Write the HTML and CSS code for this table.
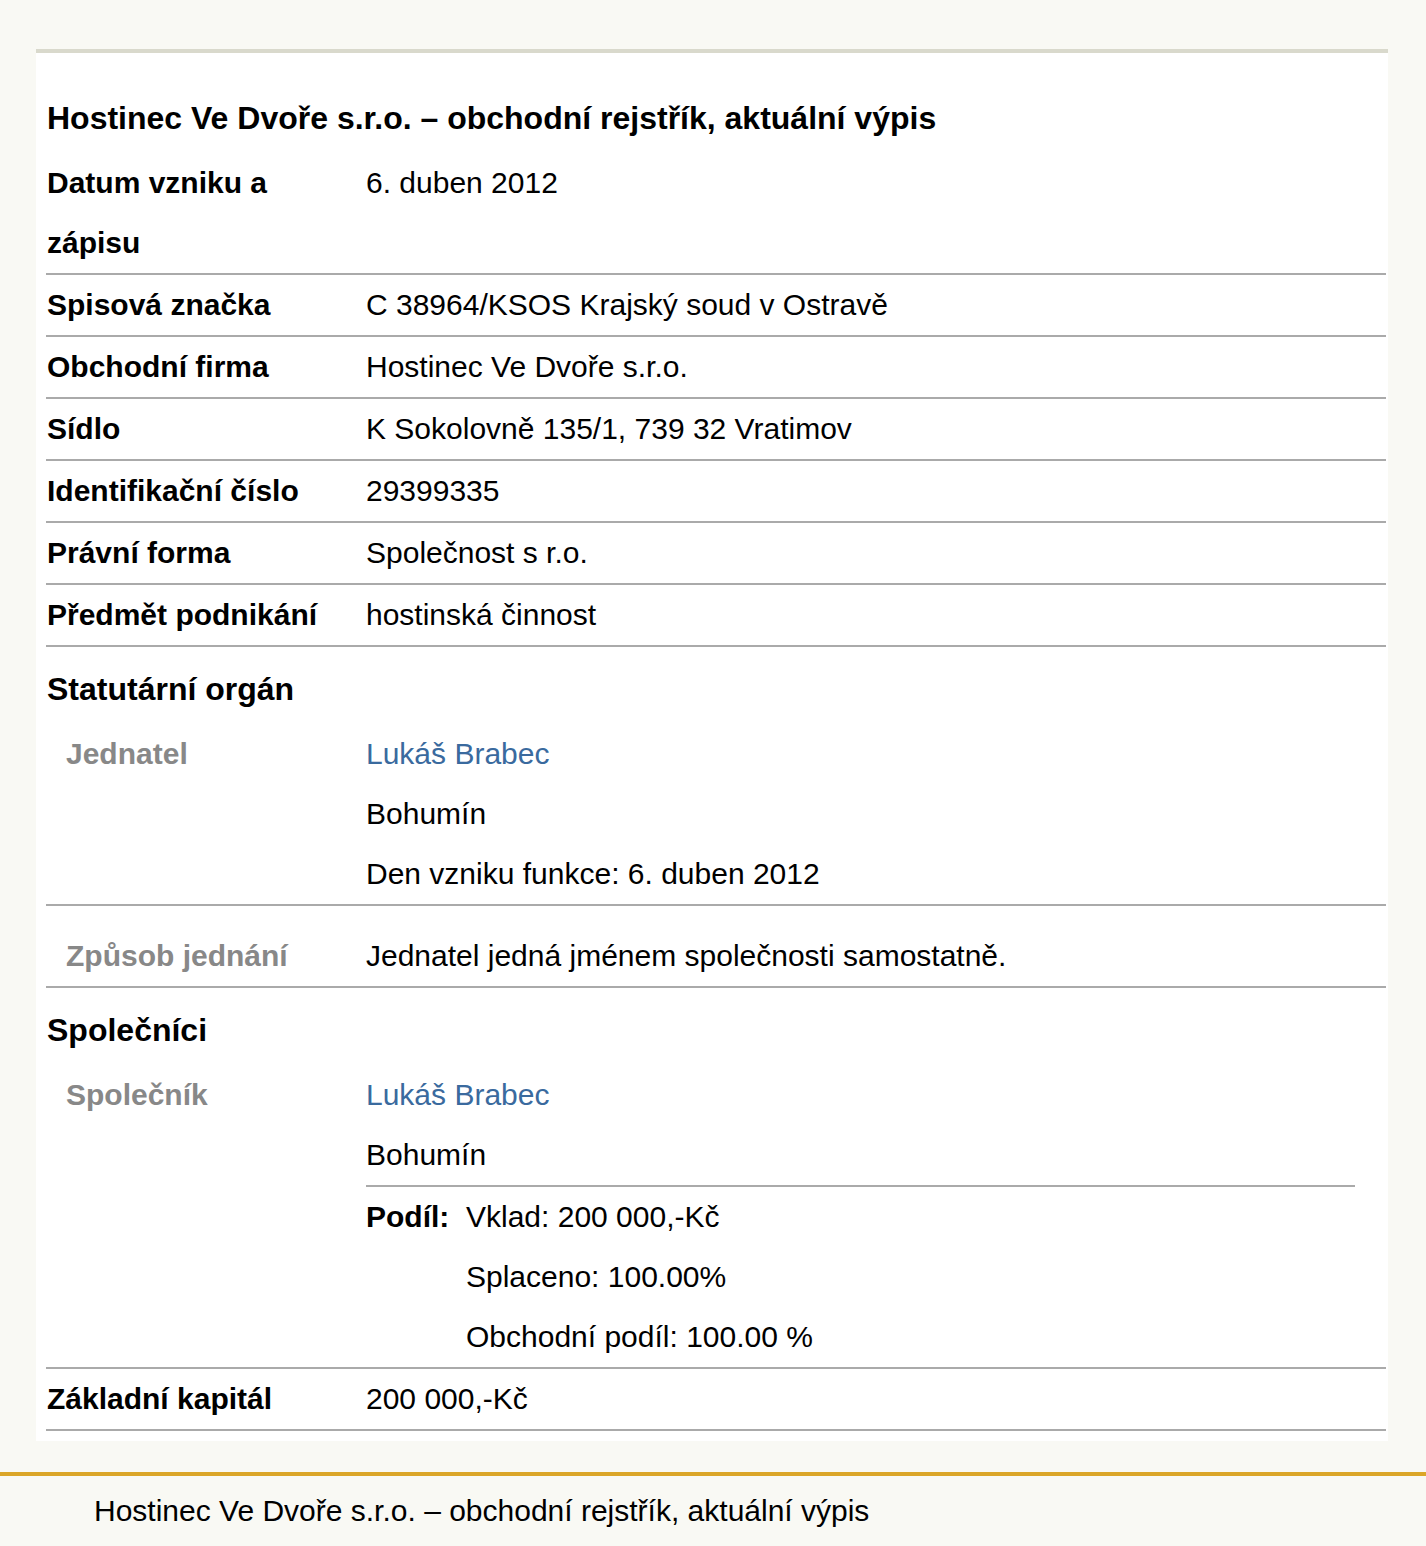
FILE: index.html
```html
<!DOCTYPE html>
<html lang="cs">
<head>
  <meta charset="UTF-8" />
  <title>Hostinec Ve Dvoře s.r.o. – obchodní rejstřík, aktuální výpis</title>
  <link rel="stylesheet" href="styles.css">
</head>
<body>
  <div class="page">
    <div class="card">
      <h2 class="title">Hostinec Ve Dvoře s.r.o. – obchodní rejstřík, aktuální výpis</h2>

      <div class="row">
        <div class="label">Datum vzniku a zápisu</div>
        <div class="value">6. duben 2012</div>
      </div>
      <div class="row">
        <div class="label">Spisová značka</div>
        <div class="value">C 38964/KSOS Krajský soud v Ostravě</div>
      </div>
      <div class="row">
        <div class="label">Obchodní firma</div>
        <div class="value">Hostinec Ve Dvoře s.r.o.</div>
      </div>
      <div class="row">
        <div class="label">Sídlo</div>
        <div class="value">K Sokolovně 135/1, 739 32 Vratimov</div>
      </div>
      <div class="row">
        <div class="label">Identifikační číslo</div>
        <div class="value">29399335</div>
      </div>
      <div class="row">
        <div class="label">Právní forma</div>
        <div class="value">Společnost s r.o.</div>
      </div>
      <div class="row">
        <div class="label">Předmět podnikání</div>
        <div class="value">hostinská činnost</div>
      </div>

      <h3 class="section">Statutární orgán</h3>
      <div class="row">
        <div class="label sub">Jednatel</div>
        <div class="value">
          <a class="person" href="#">Lukáš Brabec</a>
          <div>Bohumín</div>
          <div>Den vzniku funkce: 6. duben 2012</div>
        </div>
      </div>
      <div class="row spaced">
        <div class="label sub">Způsob jednání</div>
        <div class="value">Jednatel jedná jménem společnosti samostatně.</div>
      </div>

      <h3 class="section">Společníci</h3>
      <div class="row">
        <div class="label sub">Společník</div>
        <div class="value">
          <a class="person" href="#">Lukáš Brabec</a>
          <div>Bohumín</div>
          <div class="share">
            <div class="share-label">Podíl:</div>
            <div>
              <div>Vklad: 200 000,-Kč</div>
              <div>Splaceno: 100.00%</div>
              <div>Obchodní podíl: 100.00 %</div>
            </div>
          </div>
        </div>
      </div>
      <div class="row">
        <div class="label">Základní kapitál</div>
        <div class="value">200 000,-Kč</div>
      </div>
    </div>
  </div>

  <footer class="footer">Hostinec Ve Dvoře s.r.o. – obchodní rejstřík, aktuální výpis</footer>
</body>
</html>
```

FILE: styles.css
```css
:root {
  --page-bg: #f9f9f4;
  --card-bg: #ffffff;
  --card-top: #d9d9cc;
  --rule: #aaaaaa;
  --muted: #888888;
  --link: #3a6a9e;
  --gold: #dba628;
  --text: #000000;
}

*, *::before, *::after {
  box-sizing: border-box;
}

body {
  margin: 0;
  background-color: var(--page-bg);
  color: var(--text);
  font-family: "Liberation Sans", Arial, sans-serif;
  font-size: 30px;
  line-height: 60px;
}

.page {
  padding: 49px 38px 31px 36px;
}

.card {
  background-color: var(--card-bg);
  border-top: 4px solid var(--card-top);
  padding: 0 2px 10px 10px;
}

.title {
  margin: 0;
  padding: 35px 0 5px 1px;
  font-size: 32px;
  font-weight: bold;
}

.section {
  margin: 0;
  padding: 12px 0 5px 1px;
  font-size: 32px;
  font-weight: bold;
}

.row {
  display: flex;
  border-bottom: 2px solid var(--rule);
}

.row.spaced {
  padding-top: 20px;
}

.label {
  width: 320px;
  flex-shrink: 0;
  padding: 0 40px 0 1px;
  font-weight: bold;
}

.label.sub {
  padding-left: 20px;
  color: var(--muted);
}

.value {
  flex: 1;
}

.person {
  display: block;
  color: var(--link);
  text-decoration: none;
}

.share {
  display: flex;
  margin-right: 31px;
  border-top: 2px solid var(--rule);
}

.share-label {
  width: 100px;
  flex-shrink: 0;
  font-weight: bold;
}

.footer {
  border-top: 4px solid var(--gold);
  padding: 5px 0 0 94px;
  line-height: 60px;
}
```
